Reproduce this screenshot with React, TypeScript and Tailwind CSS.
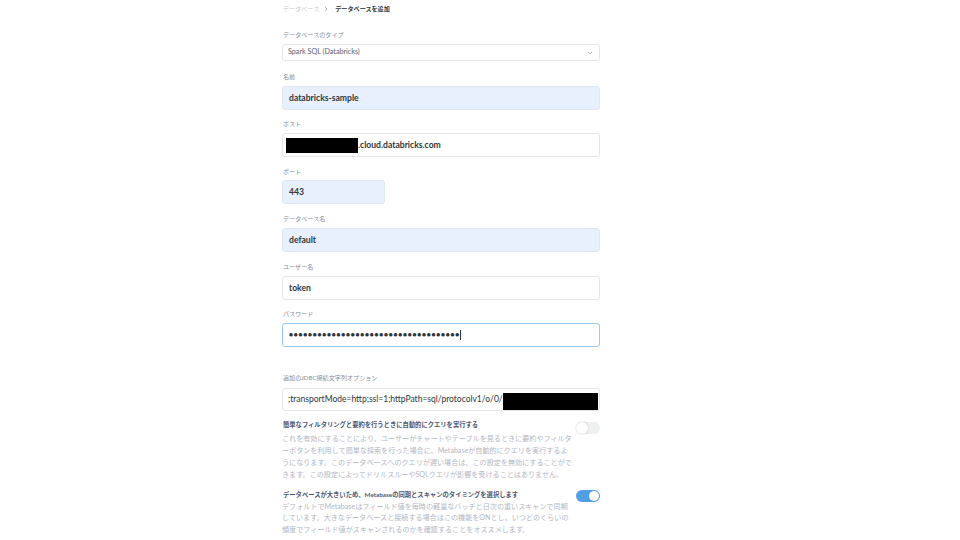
import React from "react";

const Label = ({ children, className = "" }: { children: React.ReactNode; className?: string }) => (
  <div className={`h-[8px] leading-[8px] text-[6.1px] text-[#868c97] pl-[1px] whitespace-nowrap ${className}`}>{children}</div>
);

const Toggle = ({ on, className = "" }: { on: boolean; className?: string }) =>
  on ? (
    <div className={`w-[24px] h-[12px] rounded-full bg-[#509ee3] flex items-center justify-end pr-[1px] shrink-0 ${className}`}>
      <div className="w-[10px] h-[10px] rounded-full bg-white" />
    </div>
  ) : (
    <div className={`w-[24px] h-[12px] rounded-full bg-[#eef0f2] flex items-center shrink-0 ${className}`}>
      <div className="w-[12px] h-[12px] rounded-full bg-white shadow-[0_0_1.5px_rgba(0,0,0,0.25)]" />
    </div>
  );

export default function App() {
  const dots = "●".repeat(36);
  return (
    <div className="w-[960px] h-[540px] bg-white overflow-hidden font-['Lato','Noto_Sans_CJK_JP',sans-serif]">
      <div className="ml-[282px] w-[318px] flex flex-col">
        {/* breadcrumb */}
        <div className="mt-[5px] h-[8px] flex items-center text-[6.1px] leading-[8px] pl-[1px] whitespace-nowrap">
          <span className="text-[#c6c9cf]">データベース</span>
          <svg className="ml-[5px] mr-[7px]" width="4" height="6" viewBox="0 0 4 6">
            <path d="M1 1 L3 3 L1 5" fill="none" stroke="#a0a5ae" strokeWidth="0.8" />
          </svg>
          <span className="text-[#2e353b] font-bold">データベースを追加</span>
        </div>

        <Label className="mt-[18px]">データベースのタイプ</Label>
        <div className="mt-[5px] h-[17px] border border-[#e3e5e9] rounded-[3px] flex items-center justify-between pl-[5px] pr-[6px]">
          <span className="text-[7.2px] text-[#5b6272]">Spark SQL (Databricks)</span>
          <svg width="6" height="4" viewBox="0 0 6 4">
            <path d="M1 1 L3 3 L5 1" fill="none" stroke="#b0b5bd" strokeWidth="0.9" />
          </svg>
        </div>

        <Label className="mt-[12px]">名前</Label>
        <div className="mt-[5px] h-[24px] rounded-[3px] bg-[#e8f0fe] border border-[#dfe7f5] flex items-center pl-[6px]">
          <span className="text-[8.6px] font-bold text-[#2e353b]">databricks-sample</span>
        </div>

        <Label className="mt-[10px]">ホスト</Label>
        <div className="mt-[5px] h-[24px] rounded-[3px] bg-white border border-[#e3e5e9] flex items-center pl-[3px]">
          <div className="w-[72px] h-[15px] bg-black shrink-0" />
          <span className="text-[8.6px] font-bold text-[#2e353b]">.cloud.databricks.com</span>
        </div>

        <Label className="mt-[11px]">ポート</Label>
        <div className="mt-[4px] w-[103px] h-[24px] rounded-[3px] bg-[#e8f0fe] border border-[#dfe7f5] flex items-center pl-[6px]">
          <span className="text-[8.6px] font-bold text-[#2e353b]">443</span>
        </div>

        <Label className="mt-[11px]">データベース名</Label>
        <div className="mt-[5px] h-[24px] rounded-[3px] bg-[#e8f0fe] border border-[#dfe7f5] flex items-center pl-[6px]">
          <span className="text-[8.6px] font-bold text-[#2e353b]">default</span>
        </div>

        <Label className="mt-[11px]">ユーザー名</Label>
        <div className="mt-[5px] h-[24px] rounded-[3px] bg-white border border-[#e3e5e9] flex items-center pl-[6px]">
          <span className="text-[8.6px] font-bold text-[#2e353b]">token</span>
        </div>

        <Label className="mt-[10px]">パスワード</Label>
        <div className="mt-[5px] h-[24px] rounded-[3px] bg-white border border-[#9ec8ef] flex items-center pl-[6px]">
          <span className="text-[4.5px] tracking-[0.82px] text-[#2e353b] font-['DejaVu_Sans',sans-serif] leading-none">{dots}</span>
          <div className="w-[1px] h-[10px] bg-[#2e353b] ml-[0px]" />
        </div>

        <Label className="mt-[27px]">追加のJDBC接続文字列オプション</Label>
        <div className="mt-[6px] h-[23px] rounded-[3px] bg-white border border-[#e3e5e9] flex items-center pl-[5px] pr-[2px]">
          <span className="text-[8.5px] text-[#2e353b] whitespace-nowrap">;transportMode=http;ssl=1;httpPath=sql/protocolv1/o/0/</span>
          <div className="ml-auto w-[95px] h-[17px] bg-black shrink-0 mt-[4px] mr-[1px]" />
        </div>

        <div className="mt-[10px] flex justify-between items-start">
          <div className="flex flex-col">
            <div className="h-[8px] leading-[8px] text-[6.3px] font-bold text-[#4c5773] pl-[1px] whitespace-nowrap">
              簡単なフィルタリングと要約を行うときに自動的にクエリを実行する
            </div>
            <div className="mt-[4px] text-[7.1px] leading-[12px] text-[#b3b7bf] whitespace-nowrap">
              <div>これを有効にすることにより、ユーザーがチャートやテーブルを見るときに要約やフィルタ</div>
              <div>ーボタンを利用して簡単な探索を行った場合に、Metabaseが自動的にクエリを実行するよ</div>
              <div>うになります。このデータベースへのクエリが遅い場合は、この設定を無効にすることがで</div>
              <div>きます。この設定によってドリルスルーやSQLクエリが影響を受けることはありません。</div>
            </div>
          </div>
          <Toggle on={false} className="mt-[1px]" />
        </div>

        <div className="mt-[10px] flex justify-between items-start">
          <div className="flex flex-col">
            <div className="h-[8px] leading-[8px] text-[6.3px] font-bold text-[#4c5773] pl-[1px] whitespace-nowrap">
              データベースが大きいため、Metabaseの同期とスキャンのタイミングを選択します
            </div>
            <div className="mt-[2px] text-[7.1px] leading-[11.3px] text-[#b3b7bf] whitespace-nowrap">
              <div>デフォルトでMetabaseはフィールド値を毎時の軽量なバッチと日次の重いスキャンで同期</div>
              <div>しています。大きなデータベースと接続する場合はこの機能をONとし、いつどのくらいの</div>
              <div>頻度でフィールド値がスキャンされるのかを確認することをオススメします。</div>
            </div>
          </div>
          <Toggle on={true} className="-mt-[1px]" />
        </div>
      </div>
    </div>
  );
}
